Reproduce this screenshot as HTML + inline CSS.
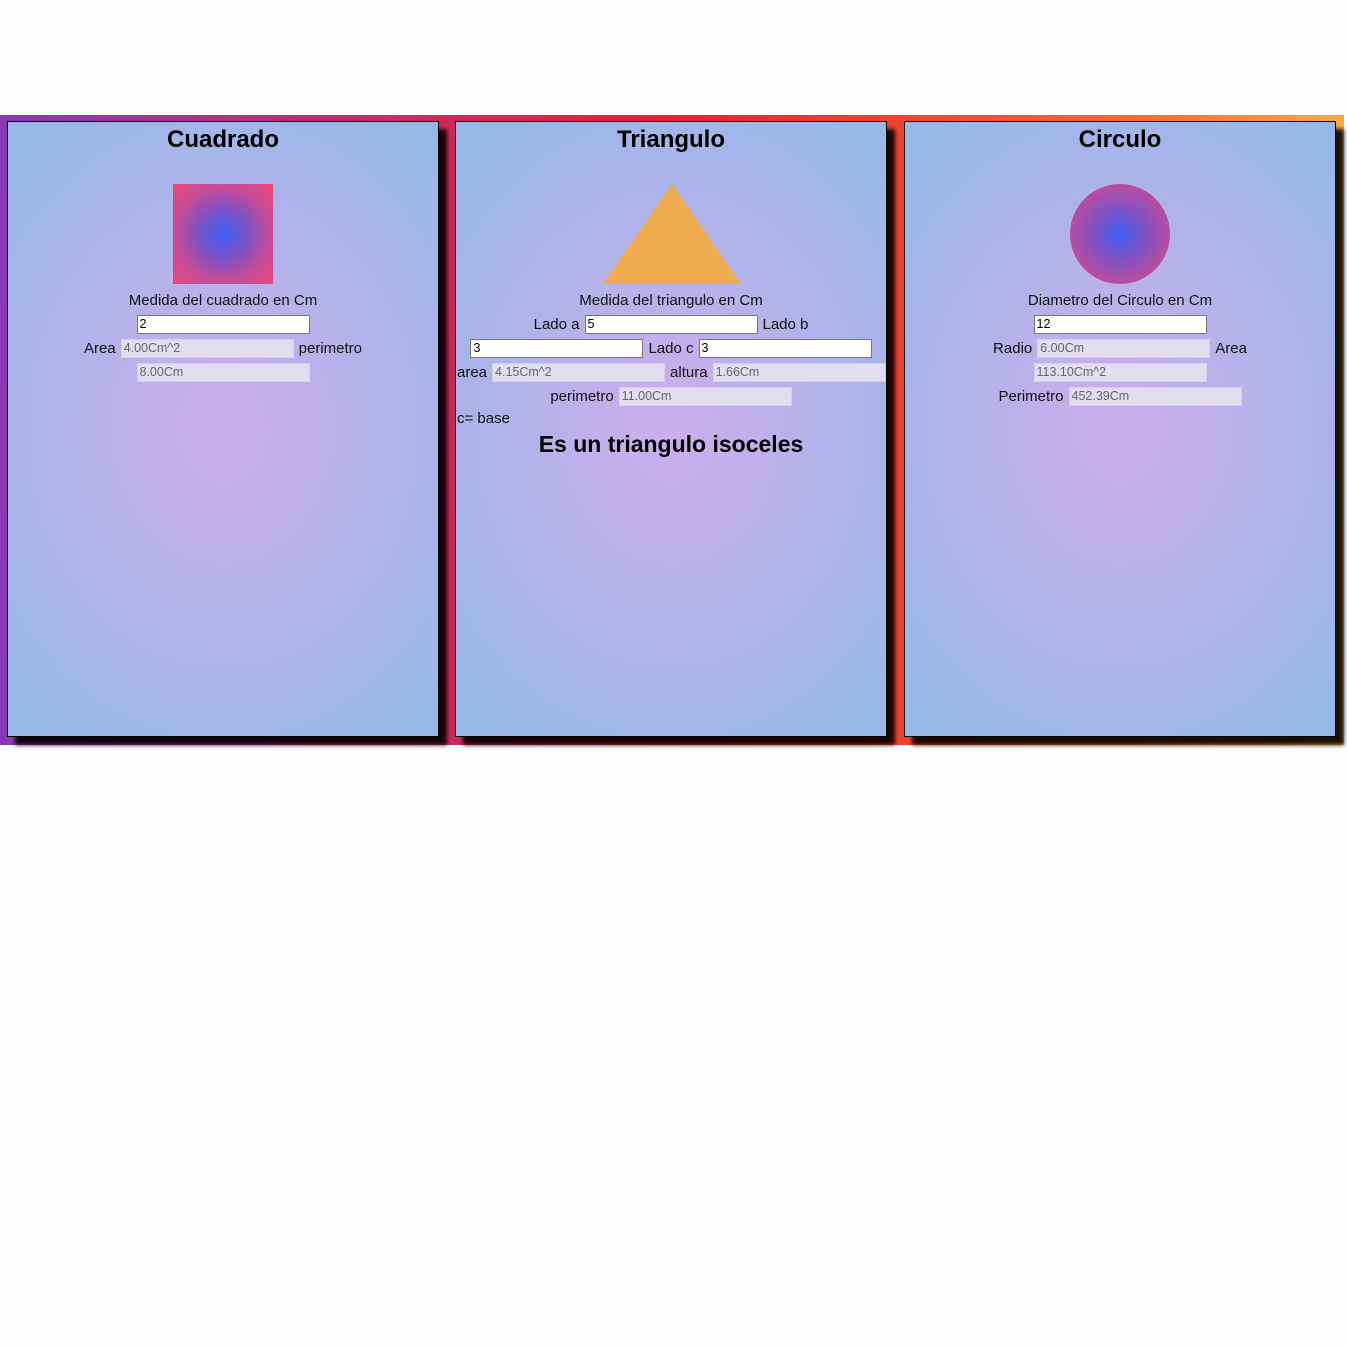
<!DOCTYPE html>
<html><head><meta charset="utf-8">
<style>
*{box-sizing:border-box;margin:0;padding:0}
html,body{width:1347px;height:1347px;background:#fefefe;overflow:hidden}
body{font-family:"Liberation Sans","DejaVu Sans",sans-serif;color:#111;position:relative}
.band{position:absolute;left:0;top:115px;width:1344px;height:630px;background:linear-gradient(90deg,#8a38b4 0%,#c02e70 25%,#e81f38 50%,#f24a2c 70%,#f86a30 85%,#f8a848 100%)}
.panel{position:absolute;top:121px;width:432px;height:616px;border:1px solid #000;
background:radial-gradient(ellipse 70% 60% at 50% 50%,#ccaeec 0%,#b4b2ea 50%,#98b8e8 100%);
box-shadow:8px 8px 4px rgba(0,0,0,.9)}
.row{position:absolute;left:0;right:0;display:flex;justify-content:center;align-items:center;gap:5px;font-size:15px;height:20px;white-space:nowrap}
h2{position:absolute;left:0;right:0;top:4px;text-align:center;font-size:24px;font-weight:bold;color:#000}
.in{display:inline-block;width:173px;height:19px;border:1px solid #777;background:#fff;font-size:12.5px;line-height:17px;padding-left:2px;color:#000;text-align:left}
.ro{background:#e2def2;border-color:#d4d0e6;color:#666}
</style></head><body>
<div class="band"></div>

<div class="panel" style="left:7px">
<h2>Cuadrado</h2>
<div style="position:absolute;left:165px;top:62px;width:100px;height:100px;background:radial-gradient(circle at 50% 50%,#3e5ff6 0%,#7d52c4 35%,#c34c98 65%,#ef4775 100%)"></div>
<div class="row" style="top:168px">Medida del cuadrado en Cm</div>
<div class="row" style="top:192px"><span class="in">2</span></div>
<div class="row" style="top:216px">Area<span class="in ro">4.00Cm^2</span>perimetro</div>
<div class="row" style="top:240px"><span class="in ro">8.00Cm</span></div>
</div>

<div class="panel" style="left:455px">
<h2>Triangulo</h2>
<svg style="position:absolute;left:146px;top:62px" width="140" height="101"><polygon points="70,0 139,100 1,100" fill="#eeac4e"/></svg>
<div class="row" style="top:168px">Medida del triangulo en Cm</div>
<div class="row" style="top:192px">Lado a<span class="in">5</span>Lado b</div>
<div class="row" style="top:216px"><span class="in">3</span>Lado c<span class="in">3</span></div>
<div class="row" style="top:240px;justify-content:flex-start;left:1px">area<span class="in ro">4.15Cm^2</span>altura<span class="in ro">1.66Cm</span></div>
<div class="row" style="top:264px">perimetro<span class="in ro">11.00Cm</span></div>
<div class="row" style="top:286px;justify-content:flex-start;left:1px">c= base</div>
<div style="position:absolute;left:0;right:0;top:309px;text-align:center;font-size:23px;font-weight:bold;color:#000">Es un triangulo isoceles</div>
</div>

<div class="panel" style="left:904px">
<h2>Circulo</h2>
<div style="position:absolute;left:165px;top:62px;width:100px;height:100px;border-radius:50%;background:radial-gradient(circle at 50% 50%,#3e5ff6 0%,#7d52c4 35%,#c24c9c 75%,#cc4c96 100%)"></div>
<div class="row" style="top:168px">Diametro del Circulo en Cm</div>
<div class="row" style="top:192px"><span class="in">12</span></div>
<div class="row" style="top:216px">Radio<span class="in ro">6.00Cm</span>Area</div>
<div class="row" style="top:240px"><span class="in ro">113.10Cm^2</span></div>
<div class="row" style="top:264px">Perimetro<span class="in ro">452.39Cm</span></div>
</div>
</body></html>
